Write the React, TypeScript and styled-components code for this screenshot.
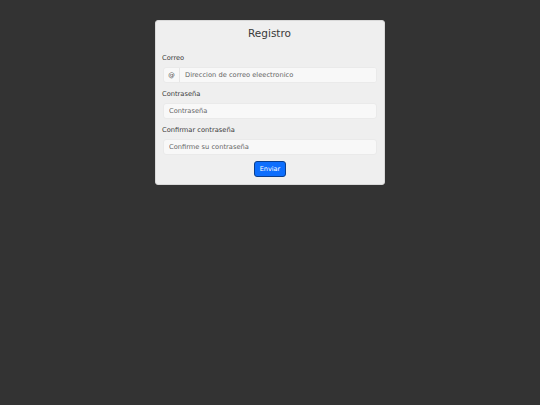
import React from 'react';
import styled, { createGlobalStyle } from 'styled-components';

const GlobalStyle = createGlobalStyle`
  html, body {
    margin: 0;
    padding: 0;
    background: #333333;
    font-family: 'DejaVu Sans', sans-serif;
  }
`;

export default function App() {
  return (
    <>
      <GlobalStyle />
      <Page>
        <Card>
          <Title>Registro</Title>
          <Form onSubmit={(e) => e.preventDefault()}>
            <Field>
              <Label htmlFor="correo">Correo</Label>
              <InputGroup>
                <Addon>@</Addon>
                <Input id="correo" type="email" placeholder="Direccion de correo eleectronico" $grouped />
              </InputGroup>
            </Field>
            <Field>
              <Label htmlFor="clave">Contraseña</Label>
              <Input id="clave" type="password" placeholder="Contraseña" />
            </Field>
            <Field>
              <Label htmlFor="confirmar">Confirmar contraseña</Label>
              <Input id="confirmar" type="password" placeholder="Confirme su contraseña" />
            </Field>
            <Actions>
              <SubmitButton type="submit">Enviar</SubmitButton>
            </Actions>
          </Form>
        </Card>
      </Page>
    </>
  );
}

const Page = styled.div`
  min-height: 405px;
  display: flex;
  justify-content: center;
  align-items: flex-start;
  padding-top: 20px;
  box-sizing: border-box;
`;

const Card = styled.div`
  width: 230px;
  box-sizing: border-box;
  background: #efefef;
  border: 1px solid #d9d9d9;
  border-radius: 3px;
  padding: 6px 7px 7px 6px;
`;

const Title = styled.h1`
  margin: 0 0 15px;
  font-size: 10.5px;
  line-height: 12px;
  font-weight: normal;
  text-align: center;
  color: #3a3a3a;
`;

const Form = styled.form`
  display: flex;
  flex-direction: column;
`;

const Field = styled.div`
  display: flex;
  flex-direction: column;
  margin-bottom: 6px;

  & + & {
    margin-top: 1px;
  }
`;

const Label = styled.label`
  font-size: 6.7px;
  line-height: 8px;
  font-weight: normal;
  color: #3a3a3a;
  margin-bottom: 5px;
`;

const InputGroup = styled.div`
  display: flex;
  height: 16px;
  box-sizing: border-box;
  margin-left: 1px;
  border: 1px solid #eaeaea;
  border-radius: 3px;
  background: #f8f8f8;
  overflow: hidden;
`;

const Addon = styled.span`
  width: 15px;
  flex: none;
  display: flex;
  align-items: center;
  justify-content: center;
  font-size: 6.5px;
  color: #444444;
  border-right: 1px solid #e6e6e6;
`;

const Input = styled.input<{ $grouped?: boolean }>`
  box-sizing: border-box;
  height: ${(p) => (p.$grouped ? '100%' : '16px')};
  flex: ${(p) => (p.$grouped ? '1' : 'none')};
  width: ${(p) => (p.$grouped ? 'auto' : 'calc(100% - 1px)')};
  min-width: 0;
  margin: 0 0 0 ${(p) => (p.$grouped ? '0' : '1px')};
  padding: 0 5px;
  font-family: 'DejaVu Sans', sans-serif;
  font-size: 6.7px;
  color: #333333;
  background: #f8f8f8;
  border: ${(p) => (p.$grouped ? 'none' : '1px solid #eaeaea')};
  border-radius: ${(p) => (p.$grouped ? '0' : '3px')};
  outline: none;

  &::placeholder {
    color: #666666;
  }
`;

const Actions = styled.div`
  display: flex;
  justify-content: center;
  padding-left: 1px;
`;

const SubmitButton = styled.button`
  height: 16px;
  padding: 0 5px;
  font-family: 'DejaVu Sans', sans-serif;
  font-size: 6.5px;
  color: #ffffff;
  background: #0d6efd;
  border: 1px solid #0a3f8f;
  border-radius: 3px;
  cursor: pointer;
`;
